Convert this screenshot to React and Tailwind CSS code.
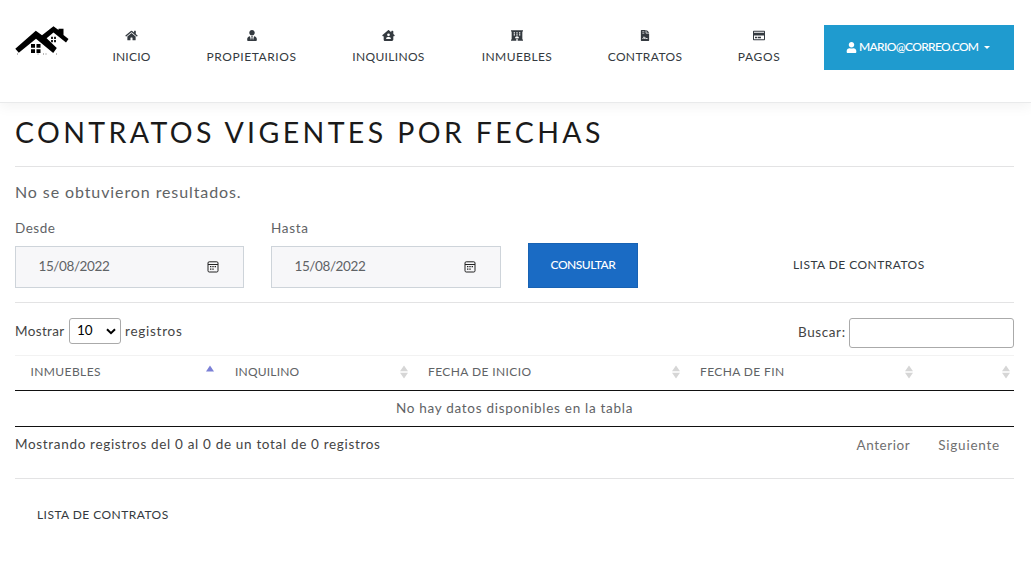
import {
  FaHome,
  FaUserTie,
  FaHotel,
  FaFileContract,
  FaRegCreditCard,
  FaUser,
} from "react-icons/fa";
import { FaHouseChimneyUser } from "react-icons/fa6";

const NAV = [
  { label: "INICIO", icon: FaHome, width: "w-[95px]", track: "tracking-[0.23px]" },
  { label: "PROPIETARIOS", icon: FaUserTie, width: "w-[145px]", track: "tracking-[0.57px]" },
  { label: "INQUILINOS", icon: FaHouseChimneyUser, width: "w-[129px]", track: "tracking-[0.32px]" },
  { label: "INMUEBLES", icon: FaHotel, width: "w-[128px]", track: "tracking-[0.4px]" },
  { label: "CONTRATOS", icon: FaFileContract, width: "w-[128px]", track: "tracking-[0.37px]" },
  { label: "PAGOS", icon: FaRegCreditCard, width: "w-[100px]", track: "tracking-[0.65px]" },
];

const COLUMNS = [
  { label: "INMUEBLES", width: "w-[204.500px]", track: "tracking-[0.4px]", pad: "pr-[6px]", sort: "asc" },
  { label: "INQUILINO", width: "w-[193px]", track: "tracking-[0.2px]", pad: "pr-[5px]" },
  { label: "FECHA DE INICIO", width: "w-[272px]", track: "tracking-[0.4px]", pad: "pr-[5px]" },
  { label: "FECHA DE FIN", width: "w-[233px]", track: "tracking-[0.38px]", pad: "pr-[5px]" },
  { label: "", width: "w-[96.500px]", track: "", pad: "pr-[4px]" },
];

function Logo() {
  return (
    <svg width="54" height="29" viewBox="0 0 54 29" className="block">
      <path d="M0.300 22.800 20.800 4.700 27 9.300 38.500 0.200 43.500 4V2.700h5v6.200l5 4.200-2.500 3.300L38.500 6.500 31.600 12.200 41.800 21.900 38.200 27 21 12.800 3.800 26.800z" fill="#000" />
      <path d="M16 18h4v3.800h-4zM21.500 18h4v3.800h-4zM16 23.300h4v3.800h-4zM21.500 23.300h4v3.800h-4z" fill="#000" />
      <path d="M36 10.800h2v2.200h-2zM39 10.800h2v2.200h-2zM36 14h2v2.200h-2zM39 14h2v2.200h-2z" fill="#222" />
      <path d="M2 27.500h1v1H2zM22.500 27.500h1v1h-1zM28 27.500h1v1h-1zM30.500 27.500h1v1h-1zM41 27.500h1v1h-1z" fill="#777" />
    </svg>
  );
}

function CalendarIcon() {
  return (
    <svg width="12" height="12" viewBox="0 0 12 12" className="block">
      <rect x="1" y="0.8" width="10" height="10.200" rx="1.200" fill="none" stroke="#222" strokeWidth="1" />
      <path d="M1 3.500h10" stroke="#222" strokeWidth="1" />
      <path d="M3 5h1.400v1.300H3zM5.300 5h1.400v1.300H5.300zM7.600 5H9v1.300H7.600zM3 7.500h1.400v1.300H3zM5.300 7.500h1.400v1.300H5.300z" fill="#222" />
    </svg>
  );
}

function SortIcon({ sort }) {
  return (
    <svg width="8" height="14" viewBox="0 0 8 14" className="block">
      {sort === "asc" ? (
        <path d="M0 6.500 4 0.500 8 6.500z" fill="#7b80d6" />
      ) : (
        <path d="M0 6.200 4 0.500 8 6.200zM0 7.800h8L4 13.500z" fill="#d6d6d6" />
      )}
    </svg>
  );
}

function DateField({ label, className, track }) {
  return (
    <div className={className}>
      <div className={`h-[22px] text-[13.500px] leading-[19px] text-[#5f6366] ${track}`}>{label}</div>
      <div className="mt-[5px] flex h-[42px] items-center justify-between border border-[#ced4da] bg-[#f7f7f9] pr-[24px] pl-[22.500px] text-[13.500px] tracking-[-0.4px] text-[#5f6366]">
        <span className="pb-[1px]">15/08/2022</span>
        <CalendarIcon />
      </div>
    </div>
  );
}

export default function App() {
  return (
    <div className="h-[580px] w-[1031px] overflow-hidden bg-white font-['Lato','Liberation_Sans',sans-serif] text-[13.500px] text-[#5f6366]">
      <header className="flex h-[103px] items-start border-b border-[#e9eaeb] pl-[15px] shadow-[0_4px_12px_rgba(0,0,0,0.05)]">
        <div className="mt-[26px] w-[69px]">
          <Logo />
        </div>
        <nav className="flex pt-[30px]">
          {NAV.map(({ label, icon: Icon, width, track }) => (
            <a key={label} className={`flex flex-col items-center text-[#343a40] ${width}`}>
              <Icon size={11} className={label === "INICIO" || label === "INQUILINOS" ? "h-[11px] w-[13px]" : "h-[11px] w-[12px]"} />
              <span className={`mt-[7px] text-[12px] leading-[18px] ${track}`}>{label}</span>
            </a>
          ))}
        </nav>
        <button className="mt-[25px] ml-[15px] flex h-[45px] w-[190px] items-center bg-[#1f9bcf] pb-[1px] pl-[21.500px] text-[12px] font-medium tracking-[-0.66px] text-white">
          <FaUser size={11} />
          <span className="ml-[2.500px]">MARIO@CORREO.COM</span>
          <span className="ml-[6px] h-0 w-0 border-x-[3.500px] border-t-[3.500px] border-x-transparent border-t-white" />
        </button>
      </header>

      <main className="flex flex-col pr-[17px] pl-[15px]">
        <h1 className="mt-[10px] h-[38px] text-[28.500px] leading-[38px] tracking-[3.38px] whitespace-nowrap text-[#1a1a1a]">
          CONTRATOS VIGENTES POR FECHAS
        </h1>
        <hr className="mt-[15px] border-[#e3e3e4]" />
        <p className="mt-[13px] h-[24px] text-[16px] leading-[24px] tracking-[0.9px]">
          No se obtuvieron resultados.
        </p>

        <div className="mt-[15px] flex h-[69px] items-end">
          <DateField label="Desde" className="w-[229px]" track="tracking-[0.5px]" />
          <DateField label="Hasta" className="ml-[27px] w-[230px]" track="tracking-[0.7px]" />
          <button className="ml-[27px] flex h-[45px] w-[110px] items-center justify-center border border-[#1862b3] bg-[#1a6bc4] pb-[1px] text-[12px] font-medium tracking-[-0.48px] text-white">
            CONSULTAR
          </button>
          <a className="mb-[14px] ml-[155px] text-[12px] leading-[18px] tracking-[0.45px] text-[#343a40]">
            LISTA DE CONTRATOS
          </a>
        </div>
        <hr className="mt-[14px] border-[#e3e3e4]" />

        <div className="mt-[15px] flex h-[30px] items-start justify-between text-[#444]">
          <div className="flex h-[26px] items-center">
            <span className="w-[54px] leading-[20px] tracking-[0.36px]">Mostrar</span>
            <div className="flex h-[26px] w-[52px] items-center justify-between rounded-[3px] border border-[#aaa] pr-[4px] pl-[7px] text-black">
              <span className="pb-[1px]">10</span>
              <svg width="10" height="7" viewBox="0 0 10 7">
                <path d="M1 1.200 5 5.200 9 1.200" fill="none" stroke="#000" strokeWidth="2" />
              </svg>
            </div>
            <span className="ml-[4px] leading-[20px] tracking-[0.75px]">registros</span>
          </div>
          <div className="flex items-center">
            <span className="w-[51px] pb-[2px] leading-[20px] tracking-[0.6px]">Buscar:</span>
            <div className="h-[30px] w-[165px] rounded-[3px] border border-[#aaa]" />
          </div>
        </div>

        <div className="mt-[7px] flex h-[36px] border-t border-b border-t-[#f2f2f2] border-b-[#111]">
          {COLUMNS.map(({ label, width, track, pad, sort }, i) => (
            <div key={i} className={`flex items-center justify-between pb-[2px] pl-[15.500px] ${width} ${pad}`}>
              <span className={`text-[12px] leading-[18px] ${track}`}>{label}</span>
              <SortIcon sort={sort} />
            </div>
          ))}
        </div>
        <div className="flex h-[36px] items-center justify-center border-b border-[#111] pb-[1px] leading-[20px] tracking-[0.71px]">
          No hay datos disponibles en la tabla
        </div>

        <div className="flex h-[36px] items-center justify-between leading-[20px] text-[#444]">
          <span className="pb-[2px] tracking-[0.67px]">Mostrando registros del 0 al 0 de un total de 0 registros</span>
          <div className="flex gap-[28px] pr-[14px] text-[#707070]">
            <span className="tracking-[0.56px]">Anterior</span>
            <span className="tracking-[0.77px]">Siguiente</span>
          </div>
        </div>
        <hr className="mt-[15px] border-[#e3e3e4]" />
        <a className="mt-[27px] ml-[22px] text-[12px] leading-[18px] tracking-[0.45px] text-[#343a40]">
          LISTA DE CONTRATOS
        </a>
      </main>
    </div>
  );
}
